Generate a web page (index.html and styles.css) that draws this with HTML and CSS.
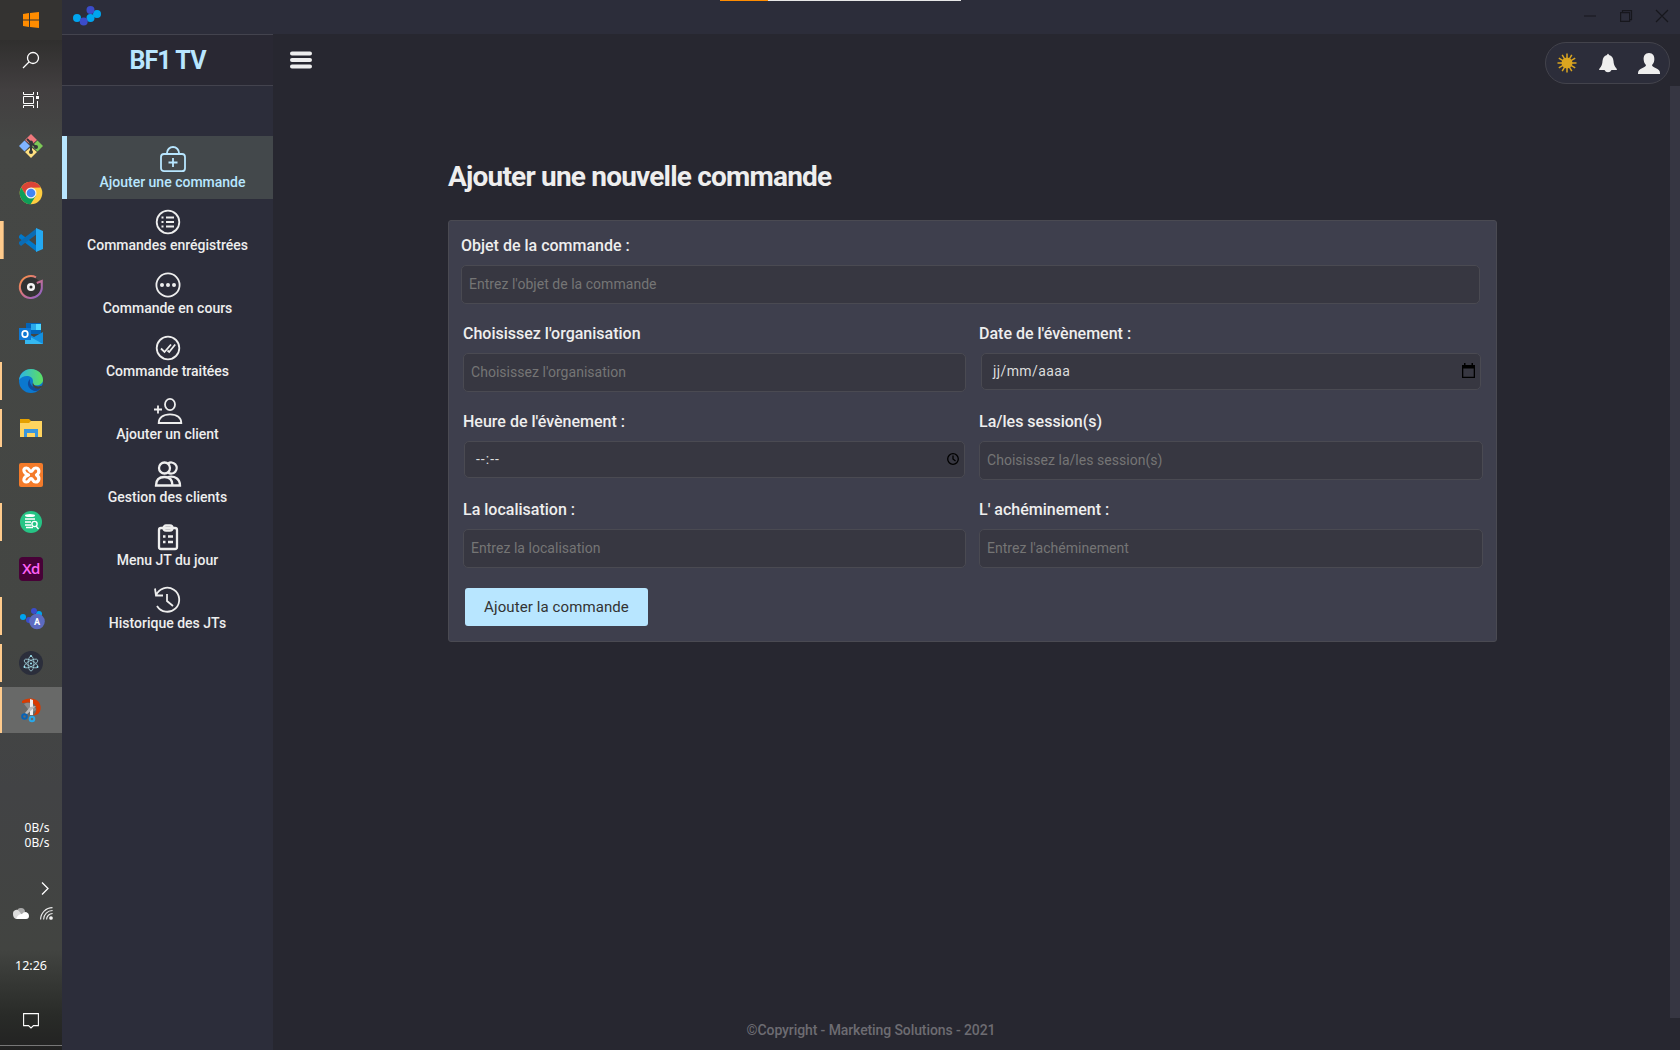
FILE: index.html
```html
<!DOCTYPE html>
<html lang="fr">
<head>
<meta charset="utf-8">
<title>BF1 TV</title>
<link rel="stylesheet" href="styles.css">
</head>
<body>
<div class="desktop">
  <aside class="taskbar">
    <div class="task start"><svg width="16" height="16" viewBox="0 0 16 16" fill="#ff8c00"><path d="M0 2l6-1v6.500H0zM7 .9L16 0v7.500H7zM0 8.500h6V15l-6-1zM7 8.500h9V16l-9-1z"/></svg></div>
    <div class="task util"><svg width="18" height="18" viewBox="0 0 18 18" fill="none" stroke="#fff" stroke-width="1.300"><circle cx="11" cy="7" r="5.500"/><path d="M7 11l-6 6"/></svg></div>
    <div class="task util"><svg width="16" height="16" viewBox="0 0 16 16" fill="none" stroke="#fff" stroke-width="1"><path d="M.5 0v2.500h10V0M.5 16v-2.500h10V16M.5 4.500h10v7H.5zM14.500 0v3M14.500 9v7"/><path fill="#fff" stroke="none" d="M13 4h3v3h-3z"/></svg></div>
    <div class="task"><svg width="24" height="24" viewBox="0 0 24 24"><path fill="#f0787c" d="M12 0l6 6-6 5-6-5z"/><path fill="#80b3ff" d="M5.500 6.500L11 12l-5.500 5.500L0 12z"/><path fill="#7cc957" d="M18.500 6.500L24 12l-5.500 5.500L13 12z"/><path fill="#ffe080" d="M12 13l6 5-6 6-6-6z"/><path fill="none" stroke="#33383a" stroke-width="2" d="M8 5l4 4v10M12 9l5 4"/><g fill="#33383a"><circle cx="12" cy="8.500" r="2"/><circle cx="12" cy="18" r="2"/><circle cx="17" cy="13" r="2"/></g></svg></div>
    <div class="task"><svg width="24" height="24" viewBox="0 0 24 24"><circle cx="12" cy="12" r="11.300" fill="#ffcd40"/><path fill="#db4437" d="M2.200 6.400A11.300 11.300 0 0 1 21.800 6.400L12 6.800 7.200 15z"/><path fill="#0f9d58" d="M2.200 6.400A11.300 11.300 0 0 0 11.600 23.300L16.800 14.800 7.200 14.800z"/><circle cx="12" cy="12" r="5.500" fill="#f1f1f1"/><circle cx="12" cy="12" r="4.300" fill="#4285f4"/></svg></div>
    <div class="task open double"><svg width="24" height="24" viewBox="0 0 24 24"><path fill="#0179cb" d="M0 8l2-2 16 12v6L0 10z"/><path fill="#0a6cb5" d="M0 16l2 2L18 6V0L0 14z"/><path fill="#24a9f2" d="M17 0l7 3v18l-7 3z"/></svg></div>
    <div class="task"><svg width="24" height="24" viewBox="0 0 24 24"><defs><linearGradient id="ring" x1="0" y1="0" x2="1" y2="1"><stop offset="0" stop-color="#ff9540"/><stop offset=".5" stop-color="#d0708b"/><stop offset="1" stop-color="#8460d0"/></linearGradient></defs><circle cx="12" cy="12" r="10" fill="#323232"/><path fill="none" stroke="url(#ring)" stroke-width="2" d="M17 2.300A11 11 0 1 0 22.800 11V6l-5 2"/><circle cx="12" cy="12" r="2.800" fill="none" stroke="#f4f4f4" stroke-width="2.500"/></svg></div>
    <div class="task"><svg width="24" height="24" viewBox="0 0 24 24"><path fill="#0364b8" d="M7 1h15v11H7z"/><path fill="#28a8ea" d="M12 2h5v6h-5z"/><path fill="#50d9ff" d="M17 2h5v6h-5z"/><path fill="#1490df" d="M6 10l9 5 9-5v12H6z"/><path fill="#35b8f1" d="M6 12l18 10H6z"/><path fill="#0f78d4" d="M0 6h12v12H0z"/><ellipse cx="6" cy="12" rx="2.800" ry="3.200" fill="none" stroke="#fff" stroke-width="1.700"/></svg></div>
    <div class="task open"><svg width="24" height="24" viewBox="0 0 24 24"><defs><linearGradient id="wave"><stop offset="0" stop-color="#2bb5e8"/><stop offset="1" stop-color="#5fe05d"/></linearGradient></defs><circle cx="12" cy="12" r="12" fill="#0b78cf"/><path fill="url(#wave)" d="M0 11C1 4 6 0 12 0c7 0 12 5 12 11 0 4-4 6-9 5-2-1-1-2-1-4C14 6 4 5 0 11z"/><path fill="#114a9b" d="M11 10c-5 5 0 12 6 12 2 0 4-2 5-4-5 2-12 0-11-8z"/><path fill="#41413f" d="M14 13c0 4 5 6 10 3l-2 3c-5 2-10-1-8-6z"/></svg></div>
    <div class="task open"><svg width="22" height="20" viewBox="0 0 22 20"><path fill="#e5a100" d="M0 1h9l2 2v3H0z"/><path fill="#ffd45f" d="M0 5h9l2-2h11v16H0z"/><path fill="#3a96dd" d="M4 11h14v8h-3v-4H7v4H4z"/></svg></div>
    <div class="task"><svg width="24" height="24" viewBox="0 0 24 24"><rect width="24" height="24" rx="2" fill="#f47b2a"/><path fill="none" stroke="#fff" stroke-width="3.200" stroke-linecap="round" stroke-linejoin="round" d="M9.500 12C4 10 3.500 5 7.500 5c3 0 2.500 3.500 4.500 3.500S13.500 5 16.500 5c4 0 4.500 5 1 7 3.500 2 3 7-1 7-3 0-2.500-3.500-4.500-3.500S10.500 19 7.500 19c-4 0-3.500-5 2-7z"/></svg></div>
    <div class="task open"><svg width="22" height="22" viewBox="0 0 22 22"><circle cx="11" cy="11" r="11" fill="#26c485"/><ellipse cx="10" cy="4.500" rx="5" ry="1.500" fill="#fff"/><path fill="none" stroke="#fff" stroke-width="1.300" d="M5 8h10M5 11h6M5 14h6M6 16.500h7M16 15l2.500 3"/><circle cx="14.500" cy="13" r="2.600" fill="#26c485" stroke="#fff" stroke-width="1.400"/></svg></div>
    <div class="task"><div class="xd">Xd</div></div>
    <div class="task open"><svg class="linked" width="25" height="24" viewBox="0 0 25 24"><g fill="#00a4ef"><circle cx="3" cy="9" r="3"/><circle cx="19" cy="6" r="3"/></g><g fill="#3b4cca"><circle cx="14" cy="3" r="3"/><circle cx="9" cy="12" r="3"/></g><circle cx="17" cy="13.500" r="7.800" fill="#5c6bc0"/><text x="17" y="17" text-anchor="middle" class="badge-letter">A</text></svg></div>
    <div class="task open"><svg width="24" height="24" viewBox="0 0 24 24"><circle cx="12" cy="12" r="12" fill="#2b2e3b"/><g fill="none" stroke="#9fcfd9" stroke-width=".8"><ellipse cx="12" cy="12.500" rx="7.500" ry="2.900" transform="rotate(28 12 12.500)"/><ellipse cx="12" cy="12.500" rx="7.500" ry="2.900" transform="rotate(90 12 12.500)"/><ellipse cx="12" cy="12.500" rx="7.500" ry="2.900" transform="rotate(-28 12 12.500)"/></g><g fill="#9feaf9"><circle cx="12" cy="12.500" r="1"/><circle cx="12" cy="5" r="1"/><circle cx="5.500" cy="16" r="1"/><circle cx="18.500" cy="16" r="1"/></g></svg></div>
    <div class="task open current"><svg width="20" height="25" viewBox="0 0 20 25"><path fill="#d83b01" d="M1 3C6-1 18-1 19.500 8c1 6-3 10-7 9 4-3 4-9-1-12C8 4 4 5 1 5z"/><path fill="#8b8b8b" d="M3 6q5-3 9 1 3 3 3 5l-5 3z"/><path fill="#eee" d="M9 1l3 1v15H9z"/><path fill="#bbb" d="M15 8L5 17l-1-2 5-6z"/><circle cx="3.500" cy="18.500" r="2.300" fill="none" stroke="#0864b8" stroke-width="2"/><circle cx="11" cy="21" r="2.300" fill="none" stroke="#28a8ea" stroke-width="2"/></svg></div>
    <div class="tray">
      <div class="net">0B/s<br>0B/s</div>
      <svg class="chev" width="8" height="13" viewBox="0 0 8 13" fill="none" stroke="#fff" stroke-width="1.300"><path d="M1 .5l6 6-6 6"/></svg>
      <div class="status"><svg width="16" height="11" viewBox="0 0 16 11"><path fill="#aaa" d="M4 4a4 4 0 0 1 8 0l2 3H3z"/><path fill="#ddd" d="M0 6a3.500 3.500 0 0 1 6-3l3 4-6 4Q0 10 0 6z"/><path fill="#fff" d="M3 11q2-5 6-5 1-2 4-2 3 1 3 4t-3 3z"/></svg><svg width="13" height="13" viewBox="0 0 13 13" fill="none" stroke="#eee" stroke-width="1.100"><path d="M.6 12.500A12 12 0 0 1 12.500.6M3.600 12.500a9 9 0 0 1 9-9M6.600 12.500a6 6 0 0 1 6-6"/><circle cx="11" cy="11" r="1.300" fill="#fff"/></svg></div>
      <div class="clock">12:26</div>
      <svg class="note" width="16" height="16" viewBox="0 0 16 16" fill="none" stroke="#fff" stroke-width="1.100"><path d="M.6.600h14.800v12H10.500L8 15l-2.500-2.400H.6z"/></svg>
    </div>
  </aside>
  <div class="app">
    <header class="titlebar">
      <svg width="28" height="20" viewBox="0 0 28 20"><g fill="#00a4ef"><circle cx="4" cy="12" r="4"/><circle cx="17.500" cy="12" r="4"/><circle cx="24" cy="8" r="4"/></g><g fill="#3b4cca"><circle cx="17.500" cy="4" r="4"/><circle cx="10.700" cy="15.500" r="4"/></g></svg>
      <div class="loader"></div>
      <svg class="window-buttons" width="84" height="12" viewBox="0 0 84 12" fill="none" stroke="#17171d" stroke-width="1.200"><path d="M0 6h12M72 0l12 12M84 0L72 12M38.500 2.500V.6h9v9h-2"/><path d="M36.600 2.600h9v8.800h-9z"/></svg>
    </header>
    <div class="body">
      <nav class="sidebar">
        <div class="brand">BF1 TV</div>
        <ul class="menu">
          <li class="item active"><svg width="26" height="26" viewBox="0 0 26 26"><rect x="1" y="8" width="24" height="17.200" rx="3"/><path d="M7 8V7a6 6 0 0 1 12 0v1M13 12v9M8.500 16.500h9"/></svg><span>Ajouter une commande</span></li>
          <li class="item"><svg width="26" height="26" viewBox="0 0 26 26"><circle cx="13" cy="13" r="11.300"/><path d="M11 8.500h8M11 13h8M11 17.500h8M6.500 8.500h2M6.500 13h2M6.500 17.500h2"/></svg><span>Commandes enrégistrées</span></li>
          <li class="item"><svg width="26" height="26" viewBox="0 0 26 26"><circle cx="13" cy="13" r="11.600"/><g class="solid"><circle cx="7" cy="13" r="2"/><circle cx="13" cy="13" r="2"/><circle cx="19" cy="13" r="2"/></g></svg><span>Commande en cours</span></li>
          <li class="item"><svg width="26" height="26" viewBox="0 0 26 26"><circle cx="13" cy="13" r="11.300"/><path d="M6 13.500l3.500 3.500 6.500-7.500M12.500 15.500l1.700 1.500 6-7.500"/></svg><span>Commande traitées</span></li>
          <li class="item"><svg width="28" height="26" viewBox="0 0 28 26"><ellipse cx="16" cy="6.500" rx="5" ry="5.700"/><path d="M4.700 25c0-5 4-8.700 11.300-8.700S27.300 20 27.300 25zM0 11.500h8M4 7.500v8"/></svg><span>Ajouter un client</span></li>
          <li class="item bold"><svg width="26" height="26" viewBox="0 0 26 26"><ellipse cx="9.500" cy="7" rx="5.500" ry="5.500"/><path d="M13 2.500A5.500 5.500 0 1 1 13 11.500M1 24.500c0-6 3-8.500 8.500-8.500s8 3 8 8.500zM13 16c7-1.500 12 2 12 8.500h-8"/></svg><span>Gestion des clients</span></li>
          <li class="item bold"><svg width="22" height="26" viewBox="0 0 22 26"><rect x="2" y="4" width="18" height="21" rx="2"/><rect x="6.500" y="1.500" width="9" height="5" rx="2.500"/><path d="M6 12.500h2.500M6 18h2.500M11 12.500h5M11 18h5"/></svg><span>Menu JT du jour</span></li>
          <li class="item"><svg width="27" height="26" viewBox="0 0 27 26"><path d="M2 8.500A12 12 0 1 1 3 19M1 1.500l1 7h7M13 7v7l6 5"/></svg><span>Historique des JTs</span></li>
        </ul>
      </nav>
      <main class="content">
        <div class="topbar">
          <svg class="burger" width="22" height="18" viewBox="0 0 22 18" fill="none" stroke="#eee" stroke-width="4" stroke-linecap="round"><path d="M2 2.500h18M2 9h18M2 15.500h18"/></svg>
          <div class="actions">
            <svg width="20" height="20" viewBox="0 0 20 20" stroke="#daa520" stroke-width="1.500"><circle cx="10" cy="10" r="4.700" fill="#daa520"/><path d="M10 .5v19M.5 10h19M5.200 1.800l9.600 16.400M14.800 1.800L5.200 18.200M1.800 5.200l16.400 9.600M1.800 14.800l16.400-9.600"/></svg>
            <svg width="18" height="20" viewBox="0 0 18 20" fill="#eee"><path d="M8 2Q9-.5 10 2q4 1 4.500 6 .2 5 3 7.500l.5 1.500H0l.5-1.500q2.800-2.500 3-7.500Q4 3 8 2zM5.500 17h7q-1 2.300-3.500 2.300T5.500 17z"/></svg>
            <svg width="22" height="21" viewBox="0 0 22 21" fill="#eee"><path d="M11 0c4 0 5.700 3 5.300 7-.3 3-1.500 4-2.300 5 0 3 8 3 8 8v1H0v-1c0-5 8-5 8-8-.8-1-2-2-2.300-5C5.300 3 7 0 11 0z"/></svg>
          </div>
        </div>
        <section class="page">
          <h1>Ajouter une nouvelle commande</h1>
          <form class="card">
            <div class="field wide"><label>Objet de la commande :</label><div class="input">Entrez l'objet de la commande</div></div>
            <div class="field"><label>Choisissez l'organisation</label><div class="input">Choisissez l'organisation</div></div>
            <div class="field"><label>Date de l'évènement :</label><div class="input native date"><span>jj/mm/aaaa</span><svg width="13" height="15" viewBox="0 0 13 15"><path fill="#000" d="M0 2h2V0h1.500v2h6V0H11v2h2v13H0zM1.300 5.500v8.200h10.400V5.500z" fill-rule="evenodd"/></svg></div></div>
            <div class="field"><label>Heure de l'évènement :</label><div class="input native time"><span>--:--</span><svg width="12" height="12" viewBox="0 0 12 12" fill="none" stroke="#000" stroke-width="1.300"><circle cx="6" cy="6" r="5.300"/><path d="M6 2.500V6l2.500 2"/></svg></div></div>
            <div class="field"><label>La/les session(s)</label><div class="input">Choisissez la/les session(s)</div></div>
            <div class="field"><label>La localisation :</label><div class="input">Entrez la localisation</div></div>
            <div class="field"><label>L' achéminement :</label><div class="input">Entrez l'achéminement</div></div>
            <button type="button" class="submit">Ajouter la commande</button>
          </form>
        </section>
        <div class="scrollbar"></div>
      </main>
    </div>
    <footer class="footer">©Copyright - Marketing Solutions - 2021</footer>
  </div>
</div>
</body>
</html>
```

FILE: styles.css
```css
* { box-sizing: border-box; }
body { margin: 0; width: 1680px; height: 1050px; overflow: hidden; background: #272730; color: #eee; font-family: Roboto, "Liberation Sans", sans-serif; }
svg { display: block; flex: none; overflow: visible; }
.desktop { display: flex; width: 1680px; height: 1050px; }

.taskbar { width: 62px; flex: none; display: flex; flex-direction: column; background: linear-gradient(#292929 0, #302f2e 40px, #423f40 90px, #454745 140px, #444643 640px, #424345 790px, #424441 950px, #292b28 1015px, #222 1050px); }
.task { height: 47px; flex: none; display: flex; align-items: center; justify-content: center; border-left: 2px solid transparent; border-right: 2px solid transparent; }
.task.start { height: 40px; background: #343331; }
.task.util { height: 40px; }
.task.util + .task.util { height: 39px; margin-bottom: 3px; }
.task.open { background: linear-gradient(#ffcb8c, #ffcb8c) left center / 2px 38px no-repeat border-box; }
.task.double { background: linear-gradient(90deg, #ffcb8c 3px, #c49e72 3px) left center / 4px 38px no-repeat border-box; }
.task.current { height: 46px; margin-top: 1px; background: #686968; border-left-color: #ffcb8c; }
.xd { width: 24px; height: 24px; border-radius: 4px; background: #470137; color: #ff61f6; font: 600 15px/23px "Open Sans", sans-serif; text-align: center; letter-spacing: -.5px; }
.linked { margin: 8px 0 0 2px; }
.badge-letter { font: 700 9px Roboto, sans-serif; fill: #fff; }
.tray { flex: 1; display: flex; flex-direction: column; align-items: center; border-bottom: 1px solid #777; margin-bottom: 4px; padding-top: 87px; color: #fff; }
.net { font: 12px/15px "Noto Sans", sans-serif; padding-left: 12px; }
.chev { margin: 32px 0 0 28px; }
.status { display: flex; gap: 11px; align-items: center; margin: 12px 0 0 4px; }
.clock { margin-top: 37px; font: 12.500px/18px "Noto Sans", sans-serif; }
.note { margin-top: 38px; }

.app { flex: 1; display: flex; flex-direction: column; background: #272730; }
.titlebar { height: 34px; flex: none; display: flex; justify-content: space-between; padding: 6px 12px 0 11px; background: #2c2d3a; }
.loader { width: 241px; height: 1px; margin: -6px 5px 0 0; background: linear-gradient(90deg, #ff8c00 48px, #e8e8e8 48px); }
.window-buttons { margin-top: 4px; }
.body { height: 984px; flex: none; display: flex; }
.sidebar { width: 211px; height: 1016px; flex: none; background: #2c2d3a; }
.brand { height: 52px; display: flex; align-items: center; justify-content: center; padding-top: 1px; background: #292833; border: solid #43434e; border-width: 1px 0; color: #b8e6ff; font-size: 25px; font-weight: 700; letter-spacing: -.9px; }
.menu { list-style: none; margin: 50px 0 0; padding: 0; }
.item { height: 63px; display: flex; flex-direction: column; align-items: center; padding-top: 10px; gap: 1px; font-size: 14px; line-height: 18px; font-weight: 500; }
.item svg { fill: none; stroke: #eee; stroke-width: 1.800; height: 26px; }
.item.bold svg { stroke-width: 2.300; }
.item .solid { fill: #eee; stroke: none; }
.item span { white-space: nowrap; }
.item.active { background: #43484b; border-left: 5px solid #b8e6ff; padding-left: 5px; color: #b8e6ff; }
.item.active svg { stroke: #b8e6ff; }

.content { flex: 1; display: grid; grid-template: 52px 1fr / 1fr 10px; }
.topbar { grid-column: 1 / 3; display: flex; align-items: flex-start; justify-content: space-between; padding: 8px 10px 0 17px; }
.burger { margin-top: 9px; }
.actions { width: 125px; height: 42px; display: flex; align-items: center; justify-content: space-between; padding: 0 9px 0 11px; background: #2c2d3a; border: 1px solid #43434c; border-radius: 21px; }
.scrollbar { background: #363642; }
.page { width: 1049px; margin-left: 175px; }
h1 { margin: 72px 0 0; font-size: 28px; line-height: 38px; font-weight: 700; letter-spacing: -.8px; white-space: nowrap; }
.card { height: 422px; margin-top: 24px; padding: 12px 13px 0 14px; display: grid; grid-template-columns: 503px 504px; column-gap: 13px; grid-auto-rows: 88px; align-items: start; background: #3e3f4d; border: 1px solid #4a4a52; border-radius: 3px; }
.field.wide { grid-column: 1 / 3; margin: 0 3px 0 -2px; }
label { display: block; height: 32px; line-height: 26px; font-size: 16px; font-weight: 500; white-space: nowrap; }
.input { height: 39px; padding: 0 7px; border: 1px solid #4a4a52; border-radius: 5px; background: #373741; color: #757575; font-size: 14px; line-height: 36px; letter-spacing: .03px; }
.native { height: 37px; display: flex; align-items: center; justify-content: space-between; color: #ddd; padding: 0 5px 2px 11px; letter-spacing: .4px; }
.date { margin: 0 2px; }
.time { margin: 0 1px; letter-spacing: 1px; }
.submit { width: 183px; height: 38px; margin: 3px 0 0 2px; padding: 0; border: 0; border-radius: 3px; background: #b8e6ff; color: #333; font: 400 15px Roboto, sans-serif; letter-spacing: .1px; }
.footer { height: 32px; padding-top: 3px; color: #6d6c72; font-size: 14px; line-height: 18px; font-weight: 500; letter-spacing: -.1px; text-align: center; z-index: 1; }
```
